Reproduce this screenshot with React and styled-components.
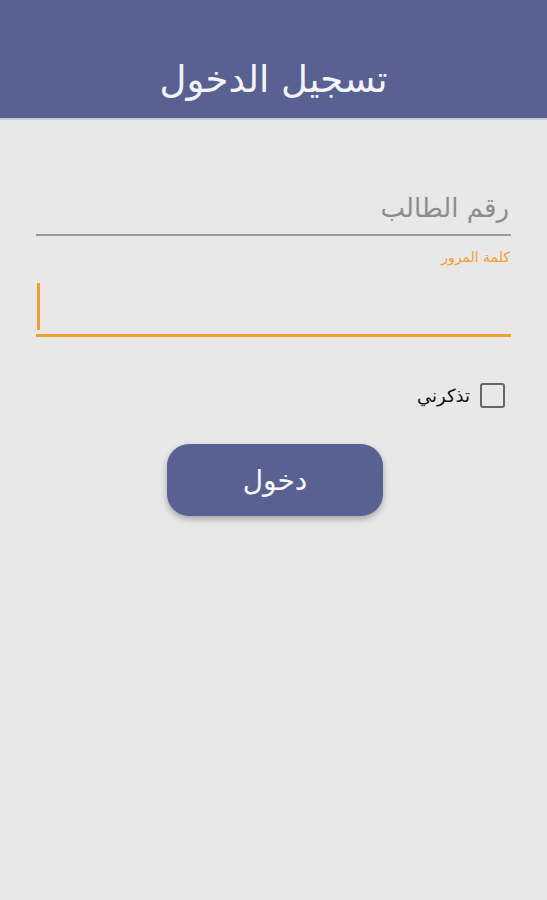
import React from 'react'
import styled, { createGlobalStyle } from 'styled-components'

const GlobalStyle = createGlobalStyle`
  html, body {
    margin: 0;
    padding: 0;
    background: #e8e8e8;
  }
  body {
    font-family: "DejaVu Sans", "Noto Sans", sans-serif;
  }
`

const Screen = styled.div`
  width: 547px;
  min-height: 900px;
  background: #e8e8e8;
  direction: rtl;
  display: flex;
  flex-direction: column;
`

const Header = styled.header`
  height: 120px;
  background: #596193;
  display: flex;
  align-items: flex-end;
  justify-content: center;
  padding-bottom: 20px;
  box-sizing: border-box;
  border-bottom: 2px solid #c9cde0;
`

const Title = styled.h1`
  margin: 0;
  color: #f4f4f8;
  font-size: 37px;
  font-weight: 400;
  line-height: 1;
`

const Form = styled.form`
  display: flex;
  flex-direction: column;
  padding: 58px 36px 0 36px;
`

const Field = styled.div`
  display: flex;
  flex-direction: column;
  border-bottom: ${(p) => (p.$active ? '3px solid #f0a030' : '2px solid #9a9a9a')};
  height: ${(p) => p.$height}px;
  box-sizing: border-box;
  justify-content: flex-end;
`

const Input = styled.input`
  all: unset;
  direction: rtl;
  font-family: "DejaVu Sans", sans-serif;
  font-size: 26px;
  color: #333;
  padding: 0 2px 11px 2px;
  &::placeholder {
    color: #8d8d8d;
  }
`

const FloatLabel = styled.label`
  color: #f0a030;
  font-size: 14px;
  margin-top: 13px;
  padding-right: 1px;
`

const Caret = styled.div`
  align-self: flex-end;
  width: 3px;
  height: 47px;
  background: #f0a030;
  margin-bottom: 4px;
  margin-left: 1px;
`

const CheckRow = styled.label`
  display: flex;
  align-items: center;
  gap: 10px;
  margin-top: 46px;
  padding-right: 6px;
`

const Box = styled.span`
  width: 21px;
  height: 21px;
  border: 2px solid #666;
  border-radius: 3px;
  box-sizing: content-box;
`

const CheckText = styled.span`
  font-size: 18px;
  color: #111;
`

const ButtonRow = styled.div`
  display: flex;
  justify-content: center;
  margin-top: 36px;
`

const SubmitButton = styled.button`
  width: 216px;
  height: 72px;
  border: none;
  border-radius: 22px;
  background: #596193;
  color: #f7f7fb;
  font-family: "DejaVu Sans", sans-serif;
  font-size: 28px;
  box-shadow: 0 3px 6px rgba(0, 0, 0, 0.3);
  margin-left: 3px;
`

function App() {
  return (
    <Screen>
      <GlobalStyle />
      <Header>
        <Title>تسجيل الدخول</Title>
      </Header>
      <Form onSubmit={(e) => e.preventDefault()}>
        <Field $height={58}>
          <Input placeholder="رقم الطالب" />
        </Field>
        <FloatLabel>كلمة المرور</FloatLabel>
        <Field $active $height={72}>
          <Caret />
        </Field>
        <CheckRow>
          <Box />
          <CheckText>تذكرني</CheckText>
        </CheckRow>
        <ButtonRow>
          <SubmitButton type="submit">دخول</SubmitButton>
        </ButtonRow>
      </Form>
    </Screen>
  )
}

export default App
